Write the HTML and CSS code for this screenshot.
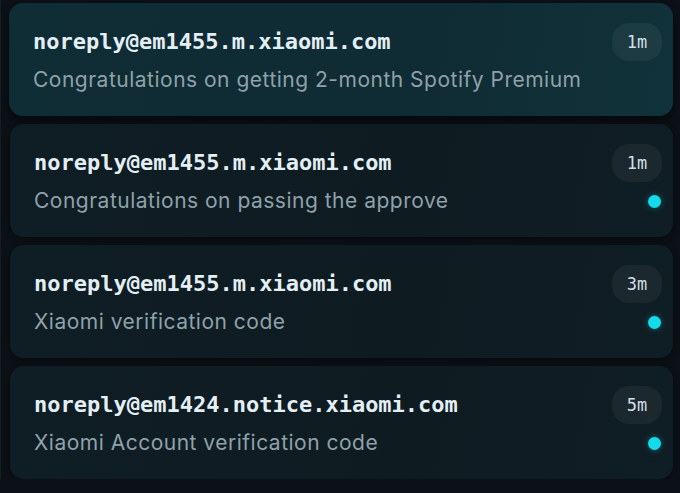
FILE: index.html
```html
<!DOCTYPE html>
<html lang="en">
<head>
    <meta charset="UTF-8">
    <meta name="viewport" content="width=device-width, initial-scale=1.0">
    <title>Inbox</title>
    <link rel="stylesheet" href="styles.css">
</head>
<body>
    <ul class="mail-list">
        <li class="mail active">
            <div class="mail-body">
                <div class="sender">noreply@em1455.m.xiaomi.com</div>
                <div class="subject">Congratulations on getting 2-month Spotify Premium</div>
            </div>
            <div class="mail-meta">
                <span class="age">1m</span>
            </div>
        </li>
        <li class="mail">
            <div class="mail-body">
                <div class="sender">noreply@em1455.m.xiaomi.com</div>
                <div class="subject">Congratulations on passing the approve</div>
            </div>
            <div class="mail-meta">
                <span class="age">1m</span>
                <span class="unread"></span>
            </div>
        </li>
        <li class="mail">
            <div class="mail-body">
                <div class="sender">noreply@em1455.m.xiaomi.com</div>
                <div class="subject">Xiaomi verification code</div>
            </div>
            <div class="mail-meta">
                <span class="age">3m</span>
                <span class="unread"></span>
            </div>
        </li>
        <li class="mail">
            <div class="mail-body">
                <div class="sender">noreply@em1424.notice.xiaomi.com</div>
                <div class="subject">Xiaomi Account verification code</div>
            </div>
            <div class="mail-meta">
                <span class="age">5m</span>
                <span class="unread"></span>
            </div>
        </li>
    </ul>
</body>
</html>
```

FILE: styles.css
```css
body {
    margin: 0;
    background-color: #0b1116;
    font-family: Inter, "Noto Sans", sans-serif;
    overflow: hidden;
}
.mail-list {
    list-style: none;
    margin: 0;
    padding: 3px 7px 0 9px;
    display: flex;
    flex-direction: column;
    gap: 8px;
    border-left: 1px solid #161e24;
}
.mail {
    height: 113px;
    box-sizing: border-box;
    display: flex;
    justify-content: space-between;
    padding: 20px 11px 0 24px;
    border-radius: 14px;
    background: linear-gradient(100deg, #0f1d24 0%, #0e1c22 60%, #0f1e24 100%);
    box-shadow: 0 2px 6px rgba(0, 0, 0, 0.45);
}
.mail.active {
    margin-left: -1px;
    background: linear-gradient(100deg, #0f2d35 0%, #0f2b33 60%, #11323a 100%);
    box-shadow: 0 4px 10px rgba(0, 0, 0, 0.55);
}
.sender {
    margin-top: 4px;
    font-family: "DejaVu Sans Mono", "Liberation Mono", monospace;
    font-weight: bold;
    font-size: 22px;
    line-height: 30px;
    color: #e4eff5;
}
.subject {
    margin-top: 9px;
    font-size: 21px;
    letter-spacing: 0.5px;
    line-height: 28px;
    color: #8fa1aa;
}
.mail-meta {
    display: flex;
    flex-direction: column;
    align-items: flex-end;
    gap: 13px;
}
.age {
    width: 50px;
    height: 38px;
    border-radius: 17px;
    background-color: rgba(255, 255, 255, 0.05);
    display: flex;
    align-items: center;
    justify-content: center;
    font-family: "DejaVu Sans Mono", "Liberation Mono", monospace;
    font-size: 17px;
    color: #d2dee4;
}
.unread {
    width: 13px;
    height: 13px;
    margin-right: 1px;
    border-radius: 50%;
    background-color: #12dcec;
    box-shadow: 0 0 6px rgba(18, 220, 236, 0.35);
}
```
